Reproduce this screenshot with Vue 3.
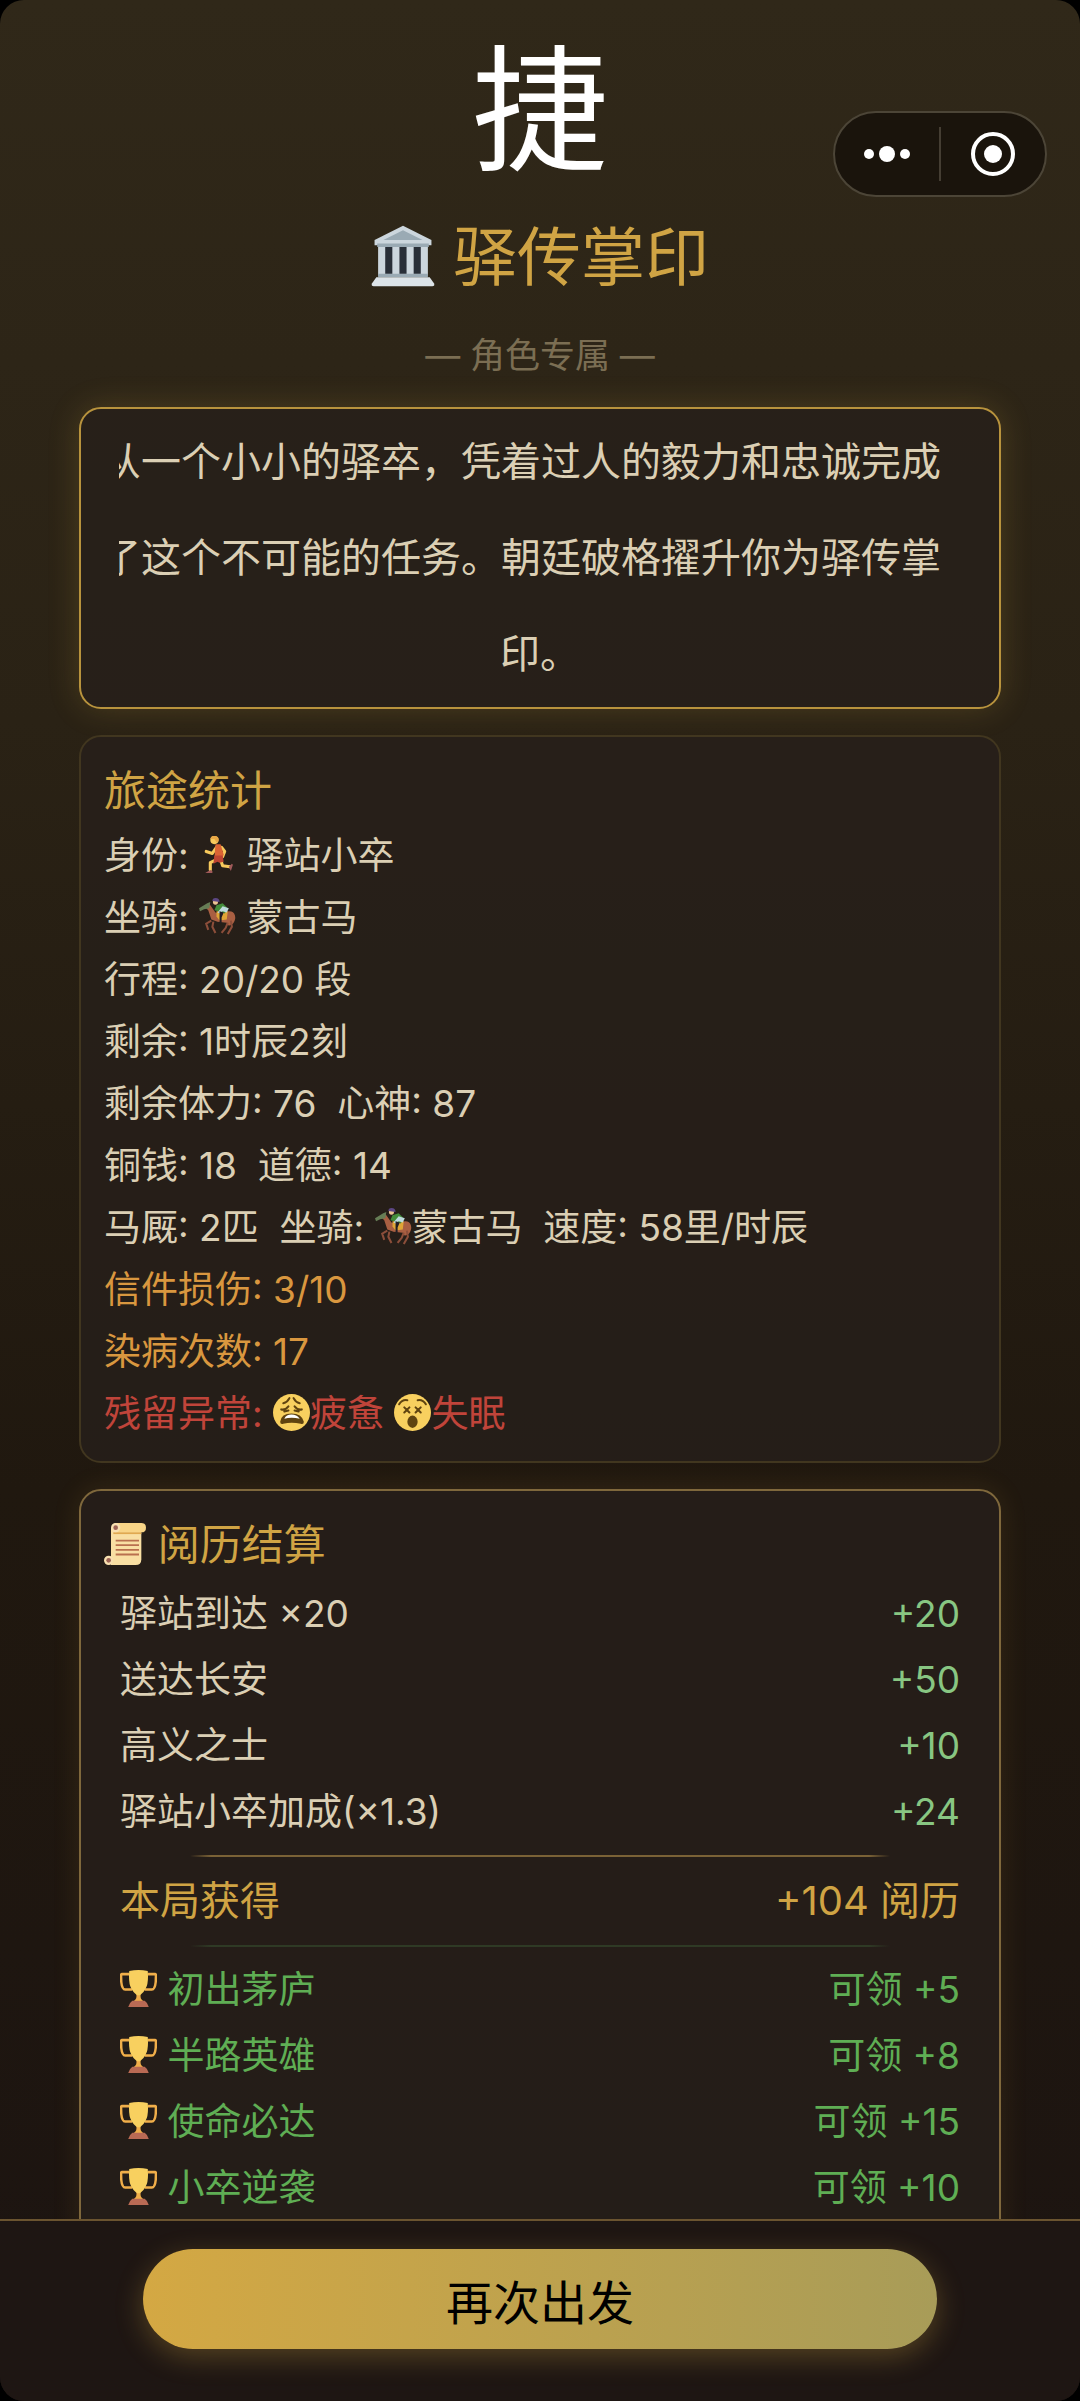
<template>
  <div class="page">
    <svg class="sprite" aria-hidden="true">
      <symbol id="temple" viewBox="0 0 36 36">
        <path d="M18 1 34 9v3H2V9z" fill="#ccd6dd" />
        <path d="M18 3.500 29 9H7z" fill="#9aaab4" />
        <path d="M4 12h28v17H4z" fill="#ccd6dd" />
        <path d="M3.500 11h29v2h-29zM4 28h28v2H4z" fill="#9aaab4" />
        <path d="M8 13h4v15H8zM16 13h4v15h-4zM24 13h4v15h-4z" fill="#292f38" />
        <path d="M3 30h30l2.500 3.500Q36 35 34.500 35h-33Q0 35 .5 33.500z" fill="#dce3e8" />
      </symbol>
      <symbol id="runner" viewBox="0 0 36 36">
        <path d="M17 11 13 17 7 15" class="limb" stroke="#f7c95c" />
        <path d="M22 11 25 15 23 20" class="limb" stroke="#f7c95c" />
        <path d="M17 23 11 26 11 33" class="limb" stroke="#f7c95c" />
        <path d="M21 23 23 29 30 30" class="limb" stroke="#f7c95c" />
        <path d="M16 8h5l3 10-1 3-8 1z" fill="#db6434" />
        <path d="M15 19h8l1 6-4 1-2-1-4 2z" fill="#be4532" />
        <path d="m6 36 5-3 2 1v2zM29 30l3-3 1 1-2 6z" fill="#a0595a" />
        <circle cx="15" cy="4" r="4" fill="#f7c95c" />
        <path d="M11 3q1-4 5-3 4 1 3 5l-2 1-2-3z" fill="#eaa846" />
      </symbol>
      <symbol id="horse" viewBox="0 0 36 36">
        <path d="m3 11 6-6 2 2 5 7q4 2 9 0 8-3 10 3 1 4-2 8l-4 2-2-3-9-1-6-2-3-9-2-2-5 1z" fill="#a95f42" />
        <path d="m0 10 8-5 3-1-1 6-5 1-4 2z" fill="#667d55" />
        <path d="M12 22 7 25l2 6M14 23l-1 5 3 6M28 24l-2 5-4 5M31 22l1 6-4 7" fill="none" stroke="#8c4e3a" stroke-width="2" />
        <path d="M17 13h11l-1 8-7 1-3-4z" fill="#e0a536" />
        <path d="m17 7 6-2 5 5-3 5-6-2-4-1z" fill="#438c3a" />
        <path d="m23 8 6 2-2 4-4-1-3 2-2-1z" fill="#bdd9dc" />
        <path d="m20 13 4 1-2 5v5h-2v-7z" fill="#211d24" />
        <circle cx="16" cy="4" r="2.500" fill="#edc493" />
        <path d="M13 3q0-3 3-3 4 0 4 4z" fill="#5c4683" />
      </symbol>
      <symbol id="weary" viewBox="0 0 36 36">
        <circle cx="18" cy="18" r="18" fill="#f8d05f" />
        <path d="M7 27q1-8 11-8t12 8q0 3-3 2-9-2-17 0-3 1-3-2z" fill="#5f4310" />
        <path d="M11 24q2-4 7-4t8 4q-8-2-15 0z" fill="#fff" />
        <path d="M8 15q4 1 7-3M11 17l4-1M28 15q-4 1-7-3M25 17l-4-1M10 9q4-1 6-5M26 9q-4-1-6-5" class="face-line" />
      </symbol>
      <symbol id="dizzy" viewBox="0 0 36 36">
        <circle cx="18" cy="18" r="18" fill="#f8d05f" />
        <ellipse cx="18" cy="27" rx="5" ry="6" fill="#5f4310" />
        <path d="m10 13 5 5m0-5-5 5M21 13l5 5m0-5-5 5M5 10q3-5 8-4M31 10q-3-5-8-4" class="face-line" />
      </symbol>
      <symbol id="scroll" viewBox="0 0 36 36">
        <path d="M6 4h26v27q0 5-5 5H6z" fill="#f9dfa3" />
        <path d="M9 0h23q4 0 4 4t-4 4H10z" fill="#f9d587" />
        <path d="M8 8h24v1.500H8z" fill="#e0a950" />
        <circle cx="10" cy="4" r="4" fill="#f9e0b0" />
        <circle cx="10" cy="4" r="2" fill="#9d6355" />
        <circle cx="4" cy="32" r="4" fill="#f9e0b0" />
        <circle cx="4" cy="32" r="2" fill="#9d6355" />
        <path d="M10 15h20M10 19h20M10 23h20M10 27h20" stroke="#b9704f" stroke-width="1.500" />
      </symbol>
      <symbol id="trophy" viewBox="0 0 36 36">
        <path d="M9 4H2q-1 0-1 2 0 13 4 13h7M27 4h7q1 0 1 2 0 13-4 13h-7" fill="none" stroke="#f0ae4a" stroke-width="2.500" />
        <path d="M16 20h4v6q0 3 4 5v2H12v-2q4-2 4-5z" fill="#f0ae4a" />
        <path d="M9 1q9-2 18 0 1 12-2 17-2 4-5 6-2 1-4 0-3-2-5-6-3-5-2-17z" fill="#f8d05f" />
        <path d="M12 30h12q3 2 4 6H8q1-4 4-6z" fill="#b96a54" />
      </symbol>
    </svg>

    <nav class="capsule" aria-label="小程序菜单">
      <button type="button" aria-label="更多">
        <svg viewBox="0 0 48 48">
          <circle cx="6" cy="24" r="5" />
          <circle cx="24" cy="24" r="8" />
          <circle cx="42" cy="24" r="5" />
        </svg>
      </button>
      <button type="button" aria-label="关闭">
        <svg viewBox="0 0 48 48">
          <circle cx="24" cy="24" r="20" class="ring" />
          <circle cx="24" cy="24" r="9" />
        </svg>
      </button>
    </nav>

    <main class="content">
      <header class="hero">
        <div class="seal">捷</div>
        <h1><svg class="emoji"><use href="#temple" /></svg> 驿传掌印</h1>
        <p class="exclusive">— 角色专属 —</p>
      </header>

      <section class="card story">
        <div class="story-clip">
          <p>{{ story }}</p>
        </div>
      </section>

      <section class="card stats">
        <h2>旅途统计</h2>
        <p v-for="(row, i) in stats" :key="i" :class="row.tone">
          <template v-for="(part, j) in row.parts" :key="j">
            <svg v-if="part.icon" class="emoji"><use :href="'#' + part.icon" /></svg>
            <span v-else>{{ part }}</span>
          </template>
        </p>
      </section>

      <section class="card result">
        <h2><svg class="emoji"><use href="#scroll" /></svg> 阅历结算</h2>
        <ul>
          <li v-for="item in gains" :key="item.label">
            <span>{{ item.label }}</span>
            <span class="gain">+{{ item.value }}</span>
          </li>
        </ul>
        <div class="divider"></div>
        <p class="total">
          <span>本局获得</span>
          <span>+{{ total }} 阅历</span>
        </p>
        <div class="divider green"></div>
        <ul class="trophies">
          <li v-for="item in trophies" :key="item.label">
            <span><svg class="emoji"><use href="#trophy" /></svg> {{ item.label }}</span>
            <span>可领 +{{ item.value }}</span>
          </li>
        </ul>
      </section>
    </main>

    <footer>
      <button type="button" class="again">再次出发</button>
    </footer>
  </div>
</template>

<script setup>
import { computed } from "vue"

const story =
  "从一个小小的驿卒，凭着过人的毅力和忠诚完成了这个不可能的任务。朝廷破格擢升你为驿传掌印。"

const stats = [
  { parts: ["身份: ", { icon: "runner" }, " 驿站小卒"] },
  { parts: ["坐骑: ", { icon: "horse" }, " 蒙古马"] },
  { parts: ["行程: 20/20 段"] },
  { parts: ["剩余: 1时辰2刻"] },
  { parts: ["剩余体力: 76  心神: 87"] },
  { parts: ["铜钱: 18  道德: 14"] },
  { parts: ["马厩: 2匹  坐骑: ", { icon: "horse" }, "蒙古马  速度: 58里/时辰"] },
  { parts: ["信件损伤: 3/10"], tone: "warn" },
  { parts: ["染病次数: 17"], tone: "warn" },
  { parts: ["残留异常: ", { icon: "weary" }, "疲惫 ", { icon: "dizzy" }, "失眠"], tone: "danger" }
]

const gains = [
  { label: "驿站到达 ×20", value: 20 },
  { label: "送达长安", value: 50 },
  { label: "高义之士", value: 10 },
  { label: "驿站小卒加成(×1.3)", value: 24 }
]

const trophies = [
  { label: "初出茅庐", value: 5 },
  { label: "半路英雄", value: 8 },
  { label: "使命必达", value: 15 },
  { label: "小卒逆袭", value: 10 }
]

const total = computed(() => gains.reduce((sum, item) => sum + item.value, 0))
</script>

<style>
body {
  background: #000;
}
</style>

<style scoped>
.page {
  position: relative;
  display: flex;
  flex-direction: column;
  height: 100vh;
  overflow: hidden;
  border-radius: 24px;
  background: linear-gradient(#302819, #2a2215 30%, #20180f 62%, #1c1411);
  color: #dbcfb4;
  font-family: Inter, "Noto Sans CJK SC", sans-serif;
  font-size: 37px;
}

.sprite {
  position: absolute;
  width: 0;
  height: 0;
}

.limb {
  fill: none;
  stroke-width: 3;
  stroke-linecap: round;
  stroke-linejoin: round;
}

.face-line {
  fill: none;
  stroke: #5f4310;
  stroke-width: 2;
  stroke-linecap: round;
}

.emoji {
  width: 1em;
  height: 1em;
  vertical-align: -0.12em;
}

h1,
h2,
p,
ul {
  margin: 0;
  padding: 0;
  font-weight: 400;
}

.capsule {
  position: absolute;
  top: 111px;
  right: 33px;
  display: flex;
  align-items: center;
  width: 214px;
  height: 86px;
  box-sizing: border-box;
  border: 2px solid #4c4537;
  border-radius: 43px;
  background: #1a140c;
}

.capsule button {
  display: flex;
  flex: 1;
  justify-content: center;
  padding: 3px 0;
  border: 0;
  background: none;
}

.capsule button + button {
  border-left: 2px solid #453e33;
}

.capsule svg {
  width: 48px;
  height: 48px;
  fill: #fff;
}

.capsule .ring {
  fill: none;
  stroke: #fff;
  stroke-width: 4;
}

.content {
  flex: 1;
  min-height: 0;
  padding: 21px 79px 20px;
  overflow-y: auto;
  scrollbar-width: none;
}

.hero {
  text-align: center;
}

.seal {
  color: #fff;
  font-size: 136px;
  line-height: 180px;
}

h1 {
  margin-top: 16px;
  color: #d0a444;
  font-size: 64px;
  line-height: 80px;
}

.exclusive {
  margin-top: 28px;
  color: #7b6e53;
  font-size: 35px;
  line-height: 60px;
}

.card {
  margin-bottom: 26px;
  padding: 20px 23px 16px;
  border: 2px solid #41361f;
  border-radius: 22px;
  background: rgba(39, 31, 26, 0.8);
}

.story {
  margin-top: 22px;
  padding: 5px 38px;
  border-color: #b8933d;
  box-shadow: 0 0 32px rgba(212, 168, 67, 0.2);
}

.story-clip {
  overflow: hidden;
}

.story p {
  margin: 0 -18px;
  font-size: 40px;
  line-height: 96px;
  text-align: left;
  text-align-last: center;
}

h2 {
  color: #d0a444;
  font-size: 42px;
  line-height: 68px;
}

.stats p {
  line-height: 62px;
  white-space: pre-wrap;
}

.warn {
  color: #d9973f;
}

.danger {
  color: #c0443a;
}

.result {
  border-color: #7f683c;
  box-shadow: 0 0 28px rgba(212, 168, 67, 0.12);
}

ul {
  padding: 2px 16px 0;
  list-style: none;
}

li,
.total {
  display: flex;
  justify-content: space-between;
  line-height: 66px;
}

.gain {
  color: #88c682;
}

.divider {
  height: 2px;
  margin: 10px 86px 0;
  border-radius: 2px;
  background: linear-gradient(90deg, transparent, #7b6236 3%, #7b6236 97%, transparent);
}

.divider.green {
  margin-top: 0;
  background: linear-gradient(90deg, transparent, #2f3a25 3%, #2f3a25 97%, transparent);
}

.total {
  padding: 0 16px;
  color: #d0a444;
  font-size: 40px;
  line-height: 88px;
}

.trophies {
  padding-top: 10px;
  padding-bottom: 16px;
  color: #5fae54;
}

footer {
  display: flex;
  justify-content: center;
  padding: 28px 24px 52px;
  border-top: 2px solid #6b5430;
  background: #1e1613;
}

.again {
  width: 77%;
  height: 100px;
  border: 0;
  border-radius: 50px;
  background: linear-gradient(90deg, #d4a843, #a89c58);
  box-shadow: 0 8px 28px rgba(212, 168, 67, 0.3);
  color: #000;
  font-family: inherit;
  font-size: 47px;
}
</style>
